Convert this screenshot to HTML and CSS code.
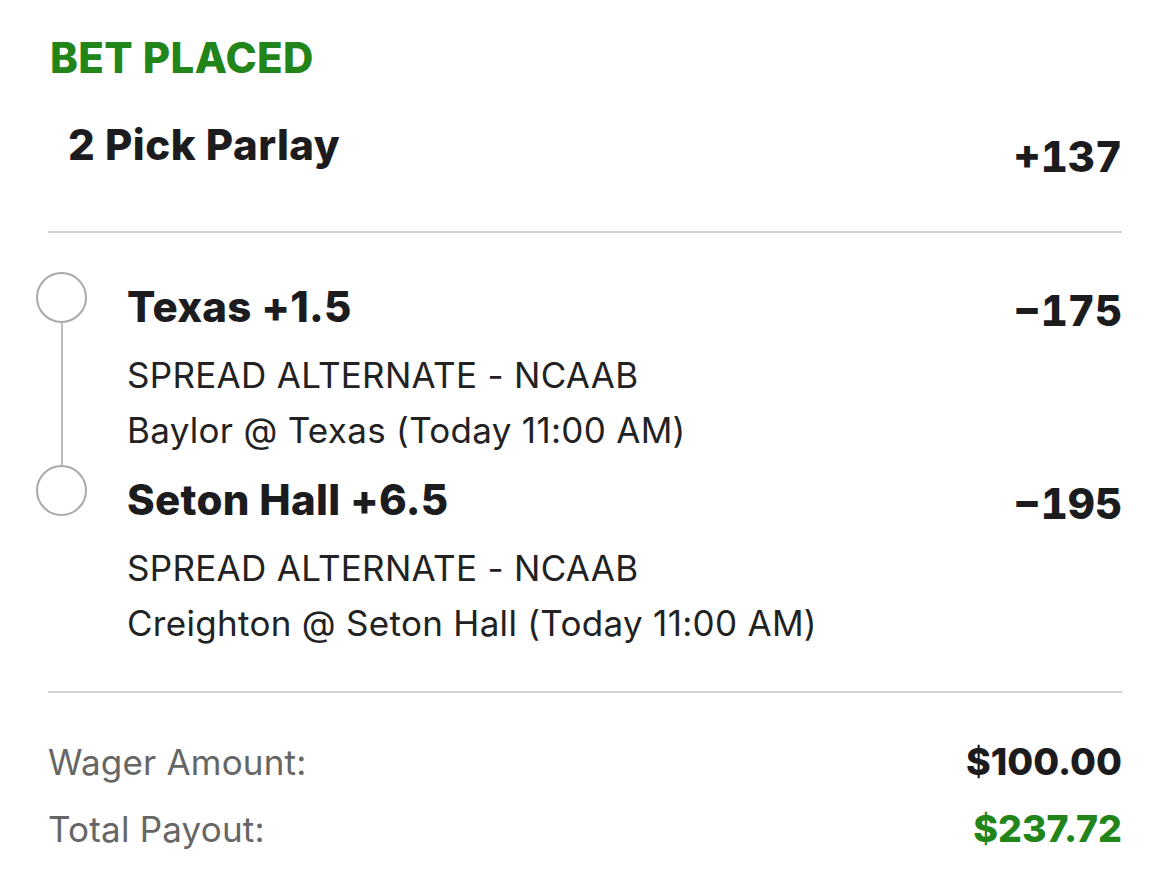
FILE: index.html
```html
<!DOCTYPE html>
<html lang="en">
<head>
<meta charset="utf-8">
<title>Bet Placed</title>
<link rel="stylesheet" href="styles.css">
</head>
<body>
<main class="slip">
  <h1 class="status">BET PLACED</h1>
  <div class="summary">
    <div class="summary-title">2 Pick Parlay</div>
    <div class="summary-odds">+137</div>
  </div>
  <hr class="divider">
  <section class="legs">
    <div class="leg">
      <div class="marker"><span class="dot"></span><span class="connector"></span></div>
      <div class="leg-info">
        <div class="leg-title">Texas +1.5</div>
        <div class="leg-sub">SPREAD ALTERNATE - NCAAB</div>
        <div class="leg-sub">Baylor @ Texas (Today 11:00 AM)</div>
      </div>
      <div class="leg-odds">&minus;175</div>
    </div>
    <div class="leg">
      <div class="marker"><span class="dot"></span></div>
      <div class="leg-info">
        <div class="leg-title">Seton Hall +6.5</div>
        <div class="leg-sub">SPREAD ALTERNATE - NCAAB</div>
        <div class="leg-sub">Creighton @ Seton Hall (Today 11:00 AM)</div>
      </div>
      <div class="leg-odds">&minus;195</div>
    </div>
  </section>
  <hr class="divider divider-bottom">
  <section class="totals">
    <div class="total-row">
      <span class="total-label">Wager Amount:</span>
      <span class="total-value">$100.00</span>
    </div>
    <div class="total-row">
      <span class="total-label">Total Payout:</span>
      <span class="total-value payout">$237.72</span>
    </div>
  </section>
</main>
</body>
</html>
```
FILE: styles.css
```css
* { box-sizing: border-box; }
html, body { margin: 0; padding: 0; background: #ffffff; }
body {
  font-family: Inter, "Noto Sans", "Liberation Sans", sans-serif;
  color: #1c1c1e;
}
.slip {
  padding: 34px 48px 0 48px;
}
.status {
  margin: 0 0 0 2px;
  font-size: 42px;
  line-height: 48px;
  font-weight: 800;
  color: #228519;
  letter-spacing: 0.4px;
}
.summary {
  display: flex;
  justify-content: space-between;
  align-items: flex-start;
  margin-top: 38px;
}
.summary-title {
  padding-left: 20px;
  font-size: 42px;
  line-height: 50px;
  font-weight: 800;
  letter-spacing: 0.5px;
}
.summary-odds {
  padding-top: 12px;
  font-size: 42px;
  line-height: 50px;
  font-weight: 800;
  font-variant-numeric: tabular-nums;
}
.divider {
  margin: 49px 0 0 0;
  border: 0;
  height: 2px;
  background: #d2d2d2;
}
.legs {
  margin: 39px 0 0 -12px;
}
.leg {
  display: grid;
  grid-template-columns: 91px 1fr auto;
}
.marker {
  display: flex;
  flex-direction: column;
  align-items: center;
  width: 51px;
}
.dot {
  width: 51px;
  height: 51px;
  border: 2px solid #a9a9a9;
  border-radius: 50%;
  flex: none;
}
.connector {
  flex: 1;
  width: 2px;
  background: #bdbdbd;
}
.leg-info {
  padding: 10px 0 7px 0;
}
.leg-title {
  font-size: 42px;
  line-height: 50px;
  font-weight: 800;
  letter-spacing: 0.3px;
  margin-bottom: 16px;
}
.leg-sub {
  font-size: 35px;
  line-height: 55px;
  font-weight: 400;
  color: #222222;
  letter-spacing: 0.3px;
}
.leg-odds {
  padding-top: 14px;
  font-size: 42px;
  line-height: 50px;
  font-weight: 800;
  font-variant-numeric: tabular-nums;
}
.divider-bottom {
  margin-top: 33px;
}
.totals {
  margin-top: 35px;
}
.total-row {
  display: flex;
  justify-content: space-between;
  align-items: center;
  height: 67px;
}
.total-label {
  font-size: 35px;
  font-weight: 400;
  color: #666666;
  letter-spacing: 0.2px;
}
.total-value {
  font-size: 37.5px;
  font-weight: 800;
  color: #1c1c1e;
}
.payout { color: #228519; }
```
